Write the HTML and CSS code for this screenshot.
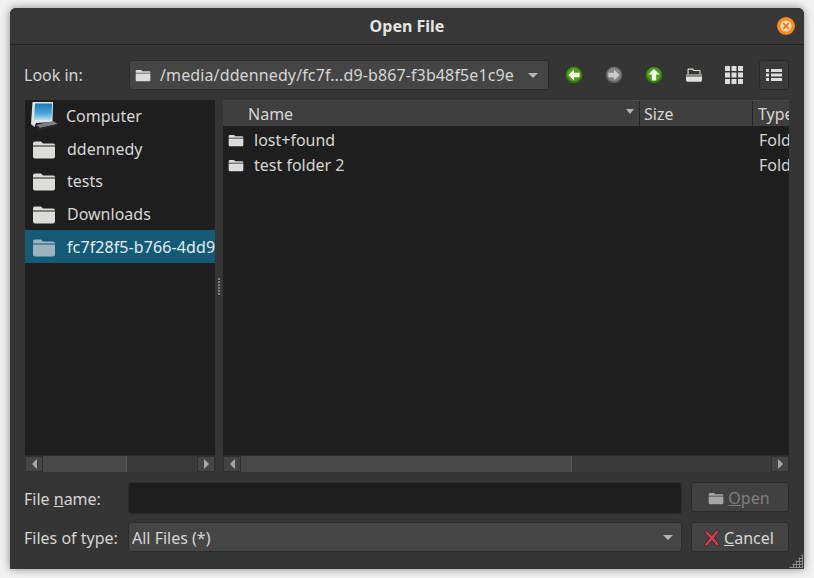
FILE: index.html
```html
<!DOCTYPE html>
<html lang="en">
<head>
<meta charset="utf-8">
<title>Open File</title>
<link rel="stylesheet" href="styles.css">
</head>
<body>
<svg class="defs" width="0" height="0" aria-hidden="true">
  <symbol id="folder" viewBox="0 0 24 20">
    <path d="M1 4.5 Q1 2.5 3 2.5 H9 L11 4.5 H21 Q23 4.5 23 6 V6.6 H1 Z" fill="currentColor"/>
    <path d="M1 7.6 H23 V17.5 Q23 19.5 21 19.5 H3 Q1 19.5 1 17.5 Z" fill="currentColor"/>
  </symbol>
</svg>
<main class="window">
  <header class="titlebar">
    <h1 class="title">Open File</h1>
    <span class="close">
      <svg width="20" height="20" viewBox="0 0 20 20"><circle cx="10" cy="10" r="9" fill="#f68b1f"/><circle cx="10" cy="10" r="5.6" fill="#fbd9b0"/><path d="M7.6 7.6 L12.4 12.4 M12.4 7.6 L7.6 12.4" stroke="#e8741a" stroke-width="1.5" stroke-linecap="round"/></svg>
    </span>
  </header>
  <div class="content">
    <div class="toolbar">
      <span class="label look-label">Look in:</span>
      <div class="combo path-combo">
        <svg class="ico-folder" width="16" height="14"><use href="#folder"/></svg>
        <span class="combo-text path-text">/media/ddennedy/fc7f...d9-b867-f3b48f5e1c9e</span>
        <span class="arrow"></span>
      </div>
      <div class="tools">
        <span class="tool">
          <svg width="18" height="18" viewBox="0 0 18 18"><circle cx="9" cy="9" r="8.3" fill="#357a0e"/><circle cx="9" cy="8.4" r="6.8" fill="#4f9f1b"/><path d="M9 3.4 L3.4 9 L9 14.6 V11.2 H14.6 V6.8 H9 Z" fill="#f4f6ef"/></svg>
        </span>
        <span class="tool">
          <svg width="18" height="18" viewBox="0 0 18 18"><circle cx="9" cy="9" r="8.3" fill="#636363"/><circle cx="9" cy="8.4" r="6.8" fill="#848484"/><path d="M9 3.4 L14.6 9 L9 14.6 V11.2 H3.4 V6.8 H9 Z" fill="#c9c9c9"/></svg>
        </span>
        <span class="tool">
          <svg width="18" height="18" viewBox="0 0 18 18"><circle cx="9" cy="9" r="8.3" fill="#357a0e"/><circle cx="9" cy="8.4" r="6.8" fill="#4f9f1b"/><path d="M9 3 L14.6 8.6 H11.2 V14.6 H6.8 V8.6 H3.4 Z" fill="#f4f6ef"/></svg>
        </span>
        <span class="tool">
          <svg width="18" height="16" viewBox="0 0 18 16"><path d="M2.5 7 V2.5 Q2.5 1.5 3.5 1.5 H8 L9 3 H14.5 Q15.5 3 15.5 4 V7 H14.4 V4.1 H8.4 L7.4 2.7 H3.6 V7 Z" fill="#e0e0dd"/><path d="M1 7.5 H17 V12.8 Q17 14.8 15.5 14.8 H2.5 Q1 14.8 1 12.8 Z M1.2 9.6 H16.8 V8.6 H1.2 Z" fill="#e0e0dd" fill-rule="evenodd"/></svg>
        </span>
        <span class="tool">
          <svg width="18" height="18" viewBox="0 0 18 18" fill="#dddddb"><rect width="5" height="5"/><rect x="6.5" width="5" height="5"/><rect x="13" width="5" height="5"/><rect y="6.5" width="5" height="5"/><rect x="6.5" y="6.5" width="5" height="5"/><rect x="13" y="6.5" width="5" height="5"/><rect y="13" width="5" height="5"/><rect x="6.5" y="13" width="5" height="5"/><rect x="13" y="13" width="5" height="5"/></svg>
        </span>
        <span class="tool tool-active">
          <svg width="16" height="14" viewBox="0 0 16 14" fill="#dddddb"><rect y="1" width="3" height="3"/><rect x="5" y="1" width="11" height="3"/><rect y="5.5" width="3" height="3"/><rect x="5" y="5.5" width="11" height="3"/><rect y="10" width="3" height="3"/><rect x="5" y="10" width="11" height="3"/></svg>
        </span>
      </div>
    </div>

    <div class="panes">
      <aside class="pane sidebar">
        <ul class="places">
          <li class="place">
            <svg width="34" height="32" viewBox="0 0 34 32">
              <defs><linearGradient id="scr" x1="0" y1="0" x2="0" y2="1"><stop offset="0" stop-color="#1878b8"/><stop offset=".6" stop-color="#4ba6d6"/><stop offset="1" stop-color="#b5dfee"/></linearGradient></defs>
              <path d="M4.5 2 H25 L24.5 22 L8 23 L6.5 27 L3 24 Z" fill="#dfe3e5"/>
              <path d="M7 3.5 H24 L23.5 20 H6 Z" fill="url(#scr)"/>
              <path d="M8 25 L25 21 L30 24 L12 28 Z" fill="#7b7f82"/>
              <path d="M12 28 L30 24 V26 L12 30.5 L8 27 V25 Z" fill="#26282a"/>
            </svg>
            <span>Computer</span>
          </li>
          <li class="place"><svg class="place-folder" width="24" height="20"><use href="#folder"/></svg><span>ddennedy</span></li>
          <li class="place"><svg class="place-folder" width="24" height="20"><use href="#folder"/></svg><span>tests</span></li>
          <li class="place"><svg class="place-folder" width="24" height="20"><use href="#folder"/></svg><span>Downloads</span></li>
          <li class="place selected"><svg class="place-folder" width="24" height="20"><use href="#folder"/></svg><span class="selected-text">fc7f28f5-b766-4dd9</span></li>
        </ul>
        <div class="scrollbar">
          <span class="sb-btn"><i class="tri-left"></i></span>
          <span class="sb-track"><span class="sb-thumb side-thumb"></span></span>
          <span class="sb-btn"><i class="tri-right"></i></span>
        </div>
      </aside>
      <div class="splitter"><i></i><i></i><i></i><i></i><i></i><i></i></div>
      <section class="pane files">
        <div class="thead">
          <div class="th th-name"><span>Name</span><span class="arrow sort"></span></div>
          <div class="th th-size">Size</div>
          <div class="th th-type">Type</div>
        </div>
        <ul class="rows">
          <li class="row"><svg class="row-folder" width="16" height="14"><use href="#folder"/></svg><span class="row-name">lost+found</span><span class="row-type">Folder</span></li>
          <li class="row"><svg class="row-folder" width="16" height="14"><use href="#folder"/></svg><span class="row-name">test folder 2</span><span class="row-type">Folder</span></li>
        </ul>
        <div class="scrollbar">
          <span class="sb-btn"><i class="tri-left"></i></span>
          <span class="sb-track"><span class="sb-thumb main-thumb"></span></span>
          <span class="sb-btn"><i class="tri-right"></i></span>
        </div>
      </section>
    </div>

    <div class="form-row name-row">
      <span class="label form-label">File <u>n</u>ame:</span>
      <div class="input"></div>
      <button class="btn btn-open" type="button" disabled><svg width="16" height="14"><use href="#folder"/></svg><span><u>O</u>pen</span></button>
    </div>
    <div class="form-row type-row">
      <span class="label form-label">Files of type:</span>
      <div class="combo type-combo"><span class="combo-text">All Files (*)</span><span class="arrow"></span></div>
      <button class="btn btn-cancel" type="button">
        <svg width="18" height="18" viewBox="0 0 18 18"><path d="M3.5 1.5 L9 6.5 L14 .8 L16.2 2 L11.2 9 L16.5 16 L13.8 17.2 L9 11.5 L3.8 17.2 L1.2 16 L6.6 9 L1.6 3 Z" fill="#c8434f" stroke="#3f1a1d" stroke-width=".8"/></svg>
        <span><u>C</u>ancel</span>
      </button>
    </div>
  </div>
  <span class="grip"></span>
</main>
</body>
</html>
```
FILE: styles.css
```css
* { box-sizing: border-box; }
html, body { margin: 0; height: 100%; }
body {
  background: #f2f2f2;
  padding: 8px 10px 9px;
  font-family: "Noto Sans", sans-serif;
  font-size: 16px;
  color: #d6d6d4;
  overflow: hidden;
}
.defs { position: absolute; }
.window {
  position: relative;
  height: 561px;
  background: #353535;
  border-radius: 6px 6px 0 0;
  box-shadow: 0 0 9px rgba(0, 0, 0, .45);
  display: flex;
  flex-direction: column;
}
.titlebar {
  height: 37px;
  flex: none;
  position: relative;
  display: flex;
  align-items: center;
  justify-content: center;
  border-bottom: 1px solid #222;
  border-radius: 6px 6px 0 0;
  background: #373737;
}
.title { margin: 0; font-size: 16px; font-weight: 700; color: #e4e4e2; }
.close { position: absolute; right: 8px; top: 8px; width: 20px; height: 20px; }
.close svg { display: block; }
.content { flex: 1; padding: 15px 15px 17px 14px; display: flex; flex-direction: column; min-height: 0; }
.label { line-height: 22px; white-space: nowrap; }
.toolbar { display: flex; align-items: center; height: 30px; flex: none; }
.look-label { width: 105px; flex: none; }
.combo {
  display: flex;
  align-items: center;
  height: 30px;
  background: #454545;
  border: 1px solid #2b2b2b;
  border-radius: 3px;
}
.path-combo { width: 420px; padding: 0 10px 0 5px; flex: none; }
.ico-folder { margin-right: 9px; color: #dcdcda; flex: none; }
.combo-text { flex: 1; white-space: nowrap; overflow: hidden; }
.path-text { letter-spacing: .12px; }
.arrow {
  width: 0; height: 0;
  border-left: 5px solid transparent;
  border-right: 5px solid transparent;
  border-top: 5px solid #b4b4b4;
  flex: none;
}
.tools { display: flex; flex: 1; align-items: center; justify-content: space-between; padding-left: 10px; }
.tool { width: 30px; height: 30px; display: flex; align-items: center; justify-content: center; border: 1px solid transparent; border-radius: 3px; }
.tool svg { display: block; }
.tool-active { background: #3b3b3b; border-color: #272727; }
.panes { display: flex; height: 372px; margin-top: 10px; flex: none; }
.pane { background: #1e1e1e; display: flex; flex-direction: column; min-width: 0; overflow: hidden; }
.sidebar { width: 190px; flex: none; margin-left: 1px; }
.places { list-style: none; margin: 0; padding: 0; flex: 1; }
.place { height: 32.5px; display: flex; align-items: center; padding-left: 7px; white-space: nowrap; overflow: hidden; }
.place:first-child { padding-left: 3px; }
.place:first-child svg { margin-right: 4px; flex: none; }
.place-folder { margin-right: 11px; flex: none; color: #dcdcda; }
.selected { background: #135a76; color: #e6edf0; height: 33px; }
.selected .place-folder { color: #9db4bf; }
.selected-text { letter-spacing: .1px; }
.splitter { width: 8px; flex: none; display: flex; flex-direction: column; align-items: center; justify-content: center; gap: 1px; }
.splitter i { width: 2px; height: 2px; background: #7d7d7d; display: block; }
.files { flex: 1; }
.thead { display: flex; height: 27px; flex: none; background: #3f3f3f; border-top: 1px solid #4a4a4a; border-bottom: 1px solid #222; }
.th { display: flex; align-items: center; border-right: 1px solid #262626; white-space: nowrap; }
.th-name { width: 417px; padding-left: 25px; justify-content: space-between; padding-right: 5px; }
.sort { margin-top: -4px; border-left-width: 4px; border-right-width: 4px; }
.th-size { width: 113px; padding-left: 4px; }
.th-type { flex: 1; padding-left: 5px; border-right: 0; overflow: hidden; }
.rows { list-style: none; margin: 0; padding: 0; flex: 1; }
.row { height: 25px; display: flex; align-items: center; padding-left: 5px; white-space: nowrap; }
.row-folder { margin-right: 10px; color: #dcdcda; flex: none; }
.row-name { width: 505px; flex: none; }
.row-type { width: 30px; overflow: hidden; flex: none; }
.scrollbar { display: flex; height: 17px; flex: none; background: #3a3a3a; border-top: 1px solid #2a2a2a; }
.sb-btn { width: 18px; flex: none; display: flex; align-items: center; justify-content: center; background: #444; border: 1px solid #303030; }
.tri-left { width: 0; height: 0; border-top: 5px solid transparent; border-bottom: 5px solid transparent; border-right: 5px solid #a8a8a8; }
.tri-right { width: 0; height: 0; border-top: 5px solid transparent; border-bottom: 5px solid transparent; border-left: 5px solid #a8a8a8; }
.sb-track { flex: 1; display: flex; }
.sb-thumb { display: block; background: #484848; border-right: 1px solid #5a5a5a; }
.side-thumb { width: 84px; }
.main-thumb { width: 331px; }
.form-row { display: flex; align-items: center; flex: none; }
.name-row { height: 32px; margin-top: 10px; }
.type-row { height: 30px; margin-top: 8px; }
.form-label { width: 104px; flex: none; padding-top: 2px; }
.input { width: 554px; height: 32px; flex: none; background: #1e1e1e; border: 1px solid #2b2b2b; border-radius: 3px; }
.type-combo { width: 554px; flex: none; padding: 2px 8px 0 3px; }
.type-combo .arrow { margin-top: -2px; }
.btn {
  width: 98px;
  height: 30px;
  margin-left: 9px;
  flex: none;
  font: inherit;
  color: inherit;
  background: #444;
  border: 1px solid #2b2b2b;
  border-radius: 3px;
  display: flex;
  align-items: center;
  justify-content: center;
  gap: 4px;
  padding: 2px 2px 0 0;
}
.btn svg { flex: none; }
.btn-cancel { gap: 3px; padding-right: 3px; }
.btn-open { color: #7e7e7e; align-self: flex-start; background: #414141; }
.btn-open svg { color: #a5a5a3; }
.grip {
  position: absolute;
  right: 1px;
  bottom: 1px;
  width: 14px;
  height: 14px;
  background-image: radial-gradient(circle, #8a8a8a 1px, transparent 1.2px);
  background-size: 3px 3px;
  clip-path: polygon(100% 0, 100% 100%, 0 100%);
}
```
